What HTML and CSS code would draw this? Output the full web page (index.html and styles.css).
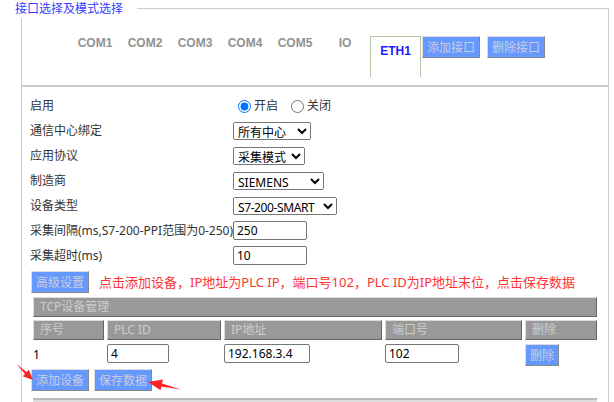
FILE: index.html
```html
<!DOCTYPE html>
<html lang="zh-CN">
<head>
    <meta charset="UTF-8">
    <title>接口选择及模式选择</title>
    <link rel="stylesheet" href="styles.css">
</head>
<body>
    <div class="group">
        <div class="group-title">接口选择及模式选择</div>

        <div class="tabbar">
            <ul class="tabs">
                <li>COM1</li>
                <li>COM2</li>
                <li>COM3</li>
                <li>COM4</li>
                <li>COM5</li>
                <li>IO</li>
                <li class="active">ETH1</li>
            </ul>
            <button class="btn">添加接口</button>
            <button class="btn">删除接口</button>
        </div>

        <div class="panel">
            <div class="form-row">
                <span class="form-label">启用</span>
                <div class="field">
                    <label class="opt"><input type="radio" name="enable" checked>开启</label>
                    <label class="opt"><input type="radio" name="enable">关闭</label>
                </div>
            </div>
            <div class="form-row">
                <span class="form-label">通信中心绑定</span>
                <select class="sel sel-center"><option>所有中心</option></select>
            </div>
            <div class="form-row">
                <span class="form-label">应用协议</span>
                <select class="sel sel-proto"><option>采集模式</option></select>
            </div>
            <div class="form-row">
                <span class="form-label">制造商</span>
                <select class="sel sel-vendor"><option>SIEMENS</option></select>
            </div>
            <div class="form-row">
                <span class="form-label">设备类型</span>
                <select class="sel sel-type"><option>S7-200-SMART</option></select>
            </div>
            <div class="form-row">
                <span class="form-label">采集间隔(ms,S7-200-PPI范围为0-250)</span>
                <input class="text-input" type="text" value="250">
            </div>
            <div class="form-row">
                <span class="form-label">采集超时(ms)</span>
                <input class="text-input" type="text" value="10">
            </div>

            <div class="note-row">
                <button class="btn">高级设置</button>
                <span class="note">点击添加设备，IP地址为PLC IP，端口号102，PLC ID为IP地址末位，点击保存数据</span>
            </div>

            <div class="dev-table">
                <div class="dev-caption">TCP设备管理</div>
                <div class="dev-head">序号</div>
                <div class="dev-head">PLC ID</div>
                <div class="dev-head">IP地址</div>
                <div class="dev-head">端口号</div>
                <div class="dev-head">删除</div>

                <div class="dev-cell"><span class="dev-no">1</span></div>
                <div class="dev-cell"><input class="text-input w-id" type="text" value="4"></div>
                <div class="dev-cell"><input class="text-input w-ip" type="text" value="192.168.3.4"></div>
                <div class="dev-cell"><input class="text-input w-port" type="text" value="102"></div>
                <div class="dev-cell"><button class="btn">删除</button></div>
            </div>

            <div class="actions">
                <button class="btn">添加设备</button>
                <button class="btn">保存数据</button>
            </div>

            <div class="next-bar"></div>
        </div>
    </div>

    <!-- 标注箭头 -->
    <svg class="arrows" width="614" height="402" viewBox="0 0 614 402">
        <polygon points="16.5,364 26.6,372.1 28.9,369.8 33,380 22.7,376.2 25,373.9" />
        <polygon points="181,389.5 162,383.4 162.9,379.5 148,382 160.6,390.3 161.4,386.4" />
    </svg>
</body>
</html>
```

FILE: styles.css
```css
* {
    box-sizing: border-box;
}

html, body {
    height: 100%;
    overflow: hidden;
}

body {
    margin: 0;
    position: relative;
    background: #fff;
    color: #333;
    font-family: "Noto Sans", "Noto Sans CJK SC", sans-serif;
    font-size: 12px;
    line-height: 16px;
}

/* 外框 */
.group {
    position: relative;
    width: 588px;
    min-height: 400px;
    margin: 8px 0 0 21px;
    border: 1px solid #ccc;
    border-bottom: none;
}

.group-title {
    position: absolute;
    top: -9px;
    left: -10px;
    padding: 0 14px 0 3px;
    background: #fff;
    color: #3a3aff;
    line-height: 18px;
}

/* 接口标签 */
.tabbar {
    display: flex;
    align-items: flex-start;
    height: 78px;
    padding: 27px 0 0 48px;
    border-bottom: 2px solid #ccc;
}

.tabs {
    display: flex;
    margin: 0;
    padding: 0;
    list-style: none;
}

.tabs li {
    width: 50px;
    text-align: center;
    font: bold 12px/14px "Liberation Sans", Arial, sans-serif;
    color: #929292;
}

.tabs li.active {
    width: 51px;
    height: 41px;
    padding-top: 7px;
    border: 1px solid #b4c8aa;
    border-bottom: none;
    color: #1a1aff;
}

.btn {
    height: 22px;
    padding: 0 4px;
    border: 1px solid;
    border-color: #ddd #888 #888 #ddd;
    background: #6699ff;
    color: #ccd;
    font-family: "Noto Sans CJK SC", sans-serif;
    font-size: 12px;
    line-height: 20px;
    cursor: pointer;
}

.tabbar .btn {
    margin-left: 1px;
}

.tabbar .btn + .btn {
    margin-left: 7px;
}

/* 表单 */
.panel {
    padding: 7px 8px 0;
}

.form-row {
    display: flex;
    align-items: center;
    height: 25px;
}

.form-row:first-child {
    height: 24px;
}

.form-label {
    width: 203px;
    flex-shrink: 0;
    white-space: nowrap;
}

.field {
    display: flex;
    align-items: center;
}

.opt {
    display: flex;
    align-items: center;
    margin-right: 8px;
}

.opt input {
    width: 13px;
    height: 13px;
    margin: 0 3px 0 5px;
}

.sel {
    height: 18px;
    padding: 0;
    font-family: inherit;
    font-size: 12px;
    color: #000;
}

.sel-center { width: 78px; }
.sel-proto  { width: 72px; }
.sel-vendor { width: 91px; }
.sel-type   { width: 104px; letter-spacing: -0.4px; }

.text-input {
    width: 74px;
    height: 19px;
    padding: 0 3px;
    border: 1px solid #767676;
    border-radius: 2px;
    font-family: inherit;
    font-size: 12px;
    color: #000;
}

.note-row {
    display: flex;
    align-items: center;
    margin: 3px 0 0 1px;
}

.note {
    margin-left: 10px;
    color: #f33;
    font-size: 13px;
    line-height: 18px;
    white-space: nowrap;
}

/* 设备表 */
.dev-table {
    display: grid;
    grid-template-columns: 71px 114px 158px 137px 72px;
    gap: 3px;
    width: 564px;
    margin: 4px 0 0 3px;
}

.dev-caption {
    grid-column: 1 / -1;
}

.dev-caption,
.dev-head {
    height: 20px;
    padding-left: 6px;
    border: 1px solid;
    border-color: #ddd #666 #666 #ddd;
    background: #999;
    color: #ccc;
    line-height: 18px;
}

.dev-cell {
    display: flex;
    align-items: flex-start;
    height: 23px;
    padding-top: 1px;
}

.dev-no {
    line-height: 21px;
    color: #000;
}

.w-id   { width: 62px; }
.w-ip   { width: 86px; }
.w-port { width: 74px; }

.actions {
    display: flex;
    gap: 5px;
    margin: 3px 0 0 1px;
}

.next-bar {
    width: 564px;
    height: 12px;
    margin: 7px 0 0 3px;
    border-top: 2px solid #bbb;
    background: #ddd;
}

.arrows {
    position: absolute;
    top: 0;
    left: 0;
    pointer-events: none;
    fill: #f22;
}
```
